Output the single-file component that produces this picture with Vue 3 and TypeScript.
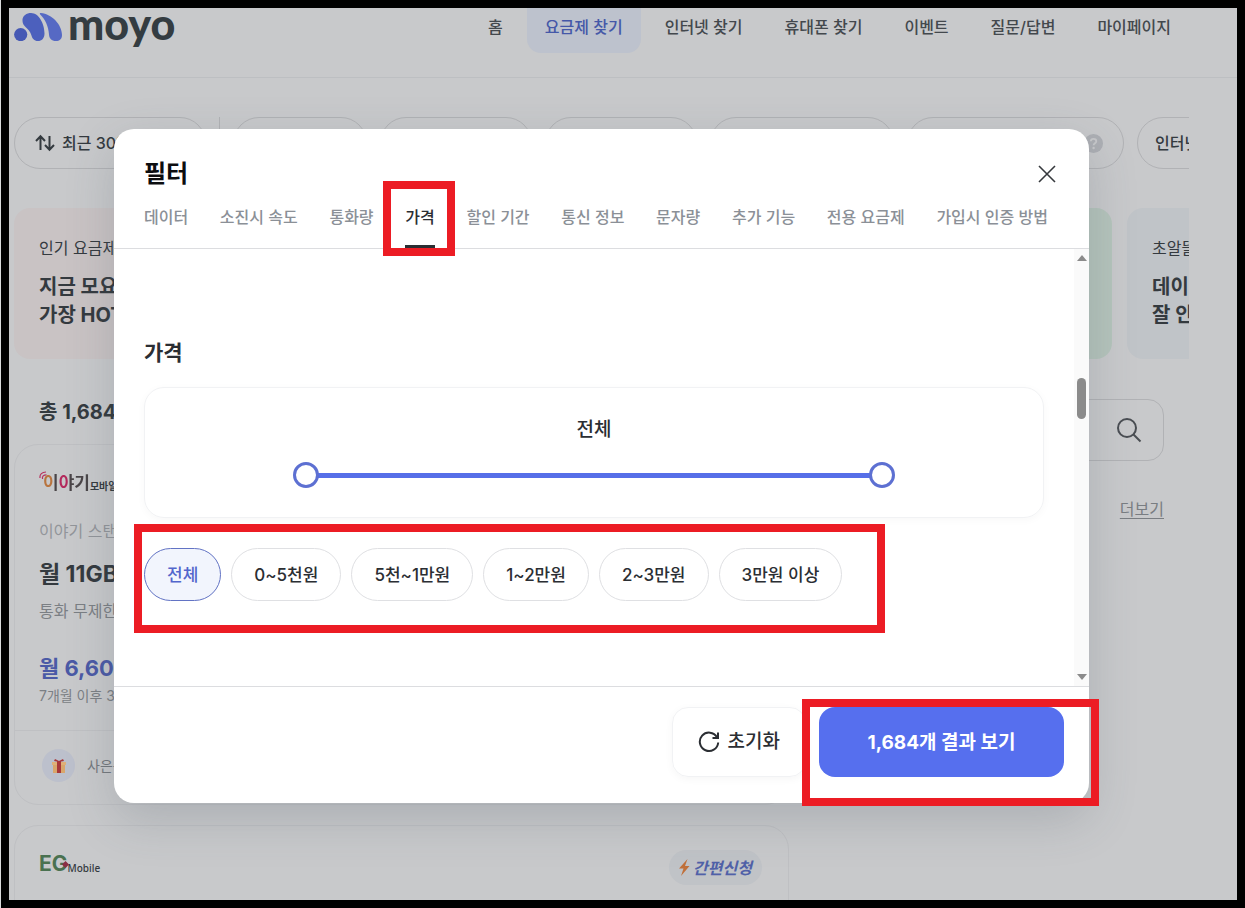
<script setup lang="ts">
import { ref } from 'vue'

interface Banner {
  tone: string
  label: string
  lines: string[]
}

const navItems: string[] = ['홈', '요금제 찾기', '인터넷 찾기', '휴대폰 찾기', '이벤트', '질문/답변', '마이페이지']
const currentNav = '요금제 찾기'

const quickFilters: { name: string; width: number }[] = [
  { name: '데이터', width: 134 },
  { name: '통화량', width: 152 },
  { name: '통신사', width: 152 },
  { name: '통신망', width: 184 },
]

const banners: Banner[] = [
  { tone: 'pink', label: '인기 요금제', lines: ['지금 모요에서', '가장 HOT한'] },
  { tone: 'plain', label: '', lines: [] },
  { tone: 'green', label: '', lines: [] },
  { tone: 'blue', label: '초알뜰', lines: ['데이터', '잘 안 쓰면'] },
]

const tabs: string[] = [
  '데이터', '소진시 속도', '통화량', '가격', '할인 기간',
  '통신 정보', '문자량', '추가 기능', '전용 요금제', '가입시 인증 방법',
]
const activeTab = ref('가격')

const priceRanges: string[] = ['전체', '0~5천원', '5천~1만원', '1~2만원', '2~3만원', '3만원 이상']
const activeRange = ref('전체')

const low = ref(0)
const high = ref(100)

function reset(): void {
  activeRange.value = '전체'
  low.value = 0
  high.value = 100
}
</script>

<template>
  <div class="frame">
    <div class="page">
      <header class="site-header">
        <a class="brand" href="#" aria-label="moyo">
          <svg class="brand-mark" viewBox="0 0 48 28" aria-hidden="true">
            <circle cx="6.7" cy="21.6" r="6.6" fill="#4558b4" />
            <path d="M8.5 8C8 2.500 13 0 17 0C25 0 30.500 11 30.500 20.500C30.500 25.500 27.500 28 24 28C20 28 18.300 25.500 17.300 22C16.200 18 14 16.500 11.500 14C9.500 12 8.700 10.500 8.500 8Z" fill="#4c60bd" />
            <path d="M26 1.200C25.600 .6 26 .1 26.800 .1C38 1 48 12 48 22C48 26 45.500 28 42 28C37.500 28 35.300 25.500 35 21.500C34.500 13 31 6 26 1.200Z" fill="#5669c4" />
          </svg>
          <span class="brand-name">moyo</span>
        </a>
        <nav class="site-nav">
          <a v-for="item in navItems" :key="item" href="#" class="nav-link" :class="{ current: item === currentNav }">{{ item }}</a>
        </nav>
      </header>

      <div class="content">
        <div class="quick-filters">
          <button type="button" class="quick sort">
            <svg width="20" height="18" viewBox="0 0 20 18" fill="none" stroke="#343a3f" stroke-width="2" aria-hidden="true">
              <path d="M5.500 16V3M1 7L5.500 2.300L10 7M14.500 2V15M10 11L14.500 15.700L19 11" />
            </svg>
            <span>최근 30일 인기순</span>
          </button>
          <span class="divider"></span>
          <button
            v-for="f in quickFilters" :key="f.name" type="button" class="quick" :aria-label="f.name"
            :style="{ width: f.width + 'px' }"
          ></button>
          <button type="button" class="quick help-filter" aria-label="도움말">
            <svg width="19" height="19" viewBox="0 0 19 19" aria-hidden="true">
              <circle cx="9.500" cy="9.500" r="9.500" fill="#adafb4" />
              <path d="M6.800 7.300C6.800 3.900 12.300 4 12.300 7.200C12.300 9.200 9.600 9.200 9.600 11.300" fill="none" stroke="#c8c9cb" stroke-width="1.800" />
              <circle cx="9.600" cy="14" r="1.200" fill="#c8c9cb" />
            </svg>
          </button>
          <button type="button" class="quick last-filter">인터넷 결합</button>
        </div>

        <div class="banners">
          <a v-for="b in banners" :key="b.tone" href="#" class="banner" :class="b.tone">
            <span class="banner-label">{{ b.label }}</span>
            <strong v-for="line in b.lines" :key="line" class="banner-line">{{ line }}</strong>
          </a>
        </div>

        <div class="results">
          <main class="plans">
            <h1 class="count">총 1,684개의 요금제</h1>

            <article class="plan">
              <div class="plan-main">
                <div class="iyagi">
                  <svg width="9" height="9" viewBox="0 0 9 9" fill="none" aria-hidden="true">
                    <path d="M1 7C.5 3.500 3 1 7 1" stroke="#b8325e" stroke-width="1.200" />
                    <path d="M3.500 8C3 5.500 4.500 3.800 7.500 3.800" stroke="#b8325e" stroke-width="1.200" />
                  </svg>
                  <span class="iyagi-name">이야기</span>
                  <span class="iyagi-sub">모바일</span>
                </div>
                <p class="plan-name">이야기 스탠다드</p>
                <h2 class="plan-data">월 11GB</h2>
                <p class="plan-call">통화 무제한</p>
                <p class="plan-price">월 6,600원</p>
                <p class="plan-after">7개월 이후 33,000원</p>
              </div>
              <div class="plan-gift">
                <span class="gift-icon">
                  <svg width="14" height="16" viewBox="0 0 14 16" aria-hidden="true">
                    <rect x="1" y="5" width="12" height="10" fill="#d9a66b" />
                    <rect x="0" y="4" width="14" height="3" fill="#dfb078" />
                    <rect x="5" y="3" width="4" height="12" fill="#a8373a" />
                    <path d="M7 4L2 3L3 1L7 3L11 1L12 3Z" fill="#a8373a" />
                  </svg>
                </span>
                <span>사은품</span>
              </div>
            </article>

            <article class="plan next-plan">
              <div class="eg">
                <span class="eg-mark">EG<i></i></span>
                <span class="eg-name">Mobile</span>
              </div>
              <span class="easy">
                <svg width="11" height="17" viewBox="0 0 11 17" aria-hidden="true">
                  <path d="M8.500 0L0 9.500H4.500L2 17L10.500 7H6Z" fill="#c0703a" />
                </svg>
                <em>간편신청</em>
              </span>
            </article>
          </main>

          <aside class="side">
            <button type="button" class="search" aria-label="검색">
              <svg width="26" height="26" viewBox="0 0 26 26" fill="none" stroke="#4a4e53" stroke-width="2" aria-hidden="true">
                <circle cx="11" cy="11" r="9" />
                <path d="M17.500 17.500L24.500 24.500" />
              </svg>
            </button>
            <a href="#" class="more">더보기</a>
          </aside>
        </div>
      </div>
    </div>

    <section class="modal" role="dialog" aria-labelledby="filter-title">
      <header class="modal-header">
        <div class="modal-title-row">
          <h2 id="filter-title" class="modal-title">필터</h2>
          <button type="button" class="close" aria-label="닫기">
            <svg width="18" height="18" viewBox="0 0 18 18" fill="none" stroke="#36393d" stroke-width="1.600" aria-hidden="true">
              <path d="M1 1L17 17M17 1L1 17" />
            </svg>
          </button>
        </div>
        <div class="tabs" role="tablist">
          <div v-for="tab in tabs" :key="tab" class="tab-cell">
            <button type="button" role="tab" class="tab" :aria-selected="tab === activeTab" :class="{ active: tab === activeTab }" @click="activeTab = tab">{{ tab }}</button>
            <span v-if="tab === '가격'" class="mark mark-tab"></span>
          </div>
        </div>
      </header>

      <div class="modal-body">
        <div class="modal-content">
          <h3 class="section-title">가격</h3>
          <div class="range-card">
            <span class="range-value">{{ activeRange }}</span>
            <div class="slider">
              <input v-model.number="low" type="range" min="0" max="100" aria-label="최소 가격">
              <input v-model.number="high" type="range" min="0" max="100" aria-label="최대 가격">
            </div>
          </div>
          <div class="chips">
            <button
              v-for="r in priceRanges" :key="r" type="button" class="chip"
              :class="{ selected: r === activeRange }" :aria-pressed="r === activeRange" @click="activeRange = r"
            >{{ r }}</button>
            <span class="mark mark-chips"></span>
          </div>
        </div>
        <div class="scrollbar" aria-hidden="true">
          <svg width="10" height="6" viewBox="0 0 10 6"><path d="M5 0L10 6H0Z" fill="#8b8b8b" /></svg>
          <span class="thumb"></span>
          <svg width="10" height="6" viewBox="0 0 10 6"><path d="M5 6L10 0H0Z" fill="#8b8b8b" /></svg>
        </div>
      </div>

      <footer class="modal-footer">
        <button type="button" class="reset" @click="reset">
          <svg width="22" height="22" viewBox="0 0 22 22" fill="none" stroke="#2b2e33" stroke-width="2" aria-hidden="true">
            <path d="M19 6.200A9.200 9.200 0 1 0 20.200 11.500" />
            <path d="M20 1.500V7H14.500" />
          </svg>
          <span>초기화</span>
        </button>
        <div class="submit-cell">
          <button type="button" class="submit">1,684개 결과 보기</button>
          <span class="mark mark-submit"></span>
        </div>
      </footer>
    </section>
  </div>
</template>

<style>
body {
  margin: 0;
  background: #d9dadb;
}
</style>

<style scoped>
.frame,
.frame * {
  box-sizing: border-box;
}

.frame {
  position: relative;
  height: 100vh;
  margin-left: 1px;
  overflow: hidden;
  border: 8px solid #000;
  background: #c8c9cb;
  color: #343a3f;
  font-family: Inter, "Noto Sans CJK KR", sans-serif;
  font-size: 16px;
  line-height: 24px;
}

button {
  padding: 0;
  border: 0;
  background: none;
  color: inherit;
  font: inherit;
  cursor: pointer;
}

a {
  color: inherit;
  text-decoration: none;
}

h1, h2, h3, p {
  margin: 0;
}

svg {
  display: block;
  flex: none;
}

.page {
  height: 100%;
  overflow: hidden;
}

/* site header */
.site-header {
  display: flex;
  justify-content: space-between;
  height: 70px;
  padding: 0 48px 0 5px;
  border-bottom: 1px solid #bdbfc2;
}

.brand {
  display: flex;
  gap: 6px;
  height: 38px;
  align-items: center;
}

.brand-mark {
  width: 48px;
  height: 28px;
}

.brand-name {
  padding-bottom: 6px;
  color: #343c41;
  font-family: Lato, sans-serif;
  font-size: 43px;
  font-weight: 900;
  line-height: 44px;
}

.site-nav {
  display: flex;
  gap: 6px;
  align-items: flex-start;
}

.nav-link {
  height: 45px;
  padding: 7px 18px 0;
  border-radius: 0 0 14px 14px;
  color: #43484d;
  font-weight: 500;
  white-space: nowrap;
}

.nav-link.current {
  background: #bdc2cd;
  color: #4558a8;
}

/* page content */
.content {
  margin-right: 48px;
  padding: 39px 0 0 5px;
  overflow: hidden;
}

.quick-filters {
  display: flex;
  gap: 13px;
}

.quick {
  display: flex;
  flex: none;
  align-items: center;
  height: 52px;
  border: 1px solid #b1b2b5;
  border-radius: 26px;
  white-space: nowrap;
  font-weight: 500;
}

.sort {
  gap: 7px;
  width: 192px;
  padding-left: 20px;
}

.divider {
  flex: none;
  width: 1px;
  background: #b1b2b5;
}

.help-filter {
  justify-content: flex-end;
  width: 217px;
  padding-right: 20px;
}

.last-filter {
  padding: 0 17px;
}

.banners {
  display: flex;
  gap: 15px;
  margin-top: 39px;
}

.banner {
  display: flex;
  flex: 0 0 356px;
  flex-direction: column;
  height: 151px;
  padding: 28px 25px;
  border-radius: 16px;
}

.pink { background: #c9c3c4; }
.plain { background: #c4c7c9; }
.green { background: #b5c4bc; }
.blue { background: #c0c4c8; }

.banner-label {
  margin-bottom: 13px;
}

.banner-line {
  font-size: 20px;
  line-height: 28px;
}

.results {
  display: grid;
  grid-template-columns: minmax(0, 775px) minmax(0, 349px);
  gap: 26px;
  margin-top: 38px;
}

.count {
  padding: 0 25px;
  font-size: 20px;
  line-height: 30px;
}

.plan {
  margin-top: 20px;
  border: 1px solid #bfc0c3;
  border-radius: 24px;
}

.count + .plan {
  margin-top: 17px;
}

.plan-main {
  padding: 26px 24px 22px;
  border-bottom: 1px solid #bfc0c3;
}

.iyagi {
  display: flex;
  align-items: center;
}

.iyagi svg {
  align-self: flex-start;
  margin-right: -5px;
}

.iyagi-name {
  background: linear-gradient(90deg, #b8743f 0 10px, #4a4548 10px 16px, #b32a5c 16px 26px, #4a4548 26px);
  background-clip: text;
  color: transparent;
  font-size: 17px;
  font-weight: 700;
}

.iyagi-sub {
  padding-top: 6px;
  font-size: 10px;
  font-weight: 700;
  line-height: 16px;
}

.plan-name {
  margin-top: 24px;
  color: #92959a;
}

.plan-data {
  margin-top: 15px;
  font-size: 23px;
  line-height: 32px;
}

.plan-call {
  margin-top: 9px;
  color: #7b7f84;
}

.plan-price {
  margin-top: 29px;
  color: #4b5aa6;
  font-size: 22px;
  font-weight: 700;
  line-height: 32px;
}

.plan-after {
  color: #7b7f84;
  font-size: 14px;
}

.plan-gift {
  display: flex;
  gap: 12px;
  align-items: center;
  padding: 18px 27px 22px;
  color: #74787d;
  font-size: 14px;
}

.gift-icon {
  display: grid;
  place-items: center;
  width: 33px;
  height: 33px;
  border-radius: 50%;
  background: #bcc0cc;
}

.next-plan {
  display: flex;
  justify-content: space-between;
  padding: 24px 26px 80px 24px;
}

.eg {
  display: flex;
  align-items: flex-end;
  height: 26px;
}

.eg-mark {
  position: relative;
  color: #4a7150;
  font-size: 21px;
  font-weight: 700;
}

.eg-mark i {
  position: absolute;
  right: 0;
  bottom: 9px;
  width: 5px;
  height: 5px;
  background: #8a2f45;
  transform: rotate(45deg);
}

.eg-name {
  font-family: "Noto Sans", sans-serif;
  font-size: 10px;
  font-weight: 500;
  line-height: 16px;
}

.easy {
  display: flex;
  gap: 3px;
  align-items: center;
  height: 35px;
  padding: 0 10px;
  border-radius: 18px;
  background: #c0c3c7;
  color: #5061a8;
  font-weight: 700;
}

.side {
  display: flex;
  flex-direction: column;
  align-items: flex-end;
  padding-top: 2px;
}

.search {
  display: flex;
  align-items: center;
  justify-content: flex-end;
  width: 100%;
  height: 62px;
  padding-right: 21px;
  border: 1px solid #b1b2b5;
  border-radius: 16px;
}

.more {
  margin-top: 36px;
  color: #797d82;
  text-decoration: underline;
  text-underline-offset: 3px;
}

/* filter dialog */
.modal {
  position: absolute;
  inset: 121px 148px 97px 105px;
  display: flex;
  flex-direction: column;
  border-radius: 20px;
  background: #fff;
  box-shadow: 0 16px 48px rgba(70, 80, 95, 0.22);
  color: #2b2e33;
}

.modal-header {
  position: relative;
  z-index: 1;
  padding: 29px 30px 0;
  border-bottom: 1px solid #dcdde0;
}

.modal-title-row {
  display: flex;
  align-items: center;
  justify-content: space-between;
  height: 32px;
}

.modal-title {
  color: #0c0d0f;
  font-size: 24px;
  line-height: 34px;
}

.close {
  padding: 3px;
}

.tabs {
  display: flex;
  justify-content: space-between;
  margin-top: 15px;
  padding-right: 11px;
}

.tab-cell {
  position: relative;
}

.tab {
  display: block;
  height: 43px;
  padding-bottom: 16px;
  border-bottom: 3px solid transparent;
  color: #8b9097;
  font-weight: 500;
  white-space: nowrap;
}

.tab.active {
  border-color: #2b2e33;
  color: #2b2e33;
}

.mark {
  position: absolute;
  border: 8px solid #ec1c24;
  pointer-events: none;
}

.mark-tab { inset: -24px -20px -8px -22px; }
.mark-chips { inset: -24px -43px -32px -10px; }
.mark-submit { inset: -8px -35px -29px -17px; }

.modal-body {
  display: grid;
  flex: 1;
  grid-template-columns: minmax(0, 1fr) 15px;
  min-height: 0;
}

.modal-content {
  padding: 88px 30px 0 30px;
}

.section-title {
  font-size: 21px;
  line-height: 32px;
}

.range-card {
  display: flex;
  flex-direction: column;
  gap: 18px;
  align-items: center;
  height: 131px;
  margin-top: 18px;
  padding-top: 28px;
  border: 1px solid #f1f2f4;
  border-radius: 20px;
  box-shadow: 0 2px 8px rgba(0, 0, 0, 0.03);
}

.range-value {
  font-size: 19px;
  font-weight: 500;
  line-height: 28px;
}

.slider {
  display: grid;
  width: 67%;
  height: 26px;
  background: linear-gradient(#566fe8, #566fe8) center / calc(100% - 26px) 5px no-repeat;
}

.slider input {
  grid-area: 1 / 1;
  width: 100%;
  height: 26px;
  margin: 0;
  appearance: none;
  background: none;
  pointer-events: none;
}

.slider input::-webkit-slider-thumb {
  width: 26px;
  height: 26px;
  appearance: none;
  border: 3px solid #5d70d2;
  border-radius: 50%;
  background: #fff;
  pointer-events: auto;
}

.chips {
  position: relative;
  display: flex;
  gap: 10px;
  width: fit-content;
  margin-top: 30px;
}

.chip {
  height: 53px;
  padding: 0 22px;
  border: 1px solid #dfe0e3;
  border-radius: 27px;
  font-size: 17px;
  font-weight: 500;
  white-space: nowrap;
}

.chip.selected {
  border-color: #6273c4;
  background: #f2f5fd;
  color: #5366cc;
}

.scrollbar {
  display: flex;
  flex-direction: column;
  align-items: center;
  justify-content: space-between;
  padding: 6px 0;
  background: #fafafa;
}

.thumb {
  width: 9px;
  height: 41px;
  margin: 0 0 138px;
  border-radius: 5px;
  background: #8b8b8b;
}

.modal-footer {
  display: flex;
  gap: 13px;
  justify-content: flex-end;
  padding: 20px 25px 26px;
  border-top: 1px solid #dcdde0;
}

.reset {
  display: flex;
  gap: 8px;
  align-items: center;
  height: 70px;
  padding: 0 25px;
  border: 1px solid #f1f2f4;
  border-radius: 16px;
  box-shadow: 0 2px 8px rgba(0, 0, 0, 0.04);
  font-size: 19px;
  font-weight: 500;
}

.submit-cell {
  position: relative;
}

.submit {
  width: 245px;
  height: 70px;
  padding-top: 2px;
  border-radius: 16px;
  background: #566fee;
  color: #fff;
  font-size: 19px;
  font-weight: 700;
}
</style>
